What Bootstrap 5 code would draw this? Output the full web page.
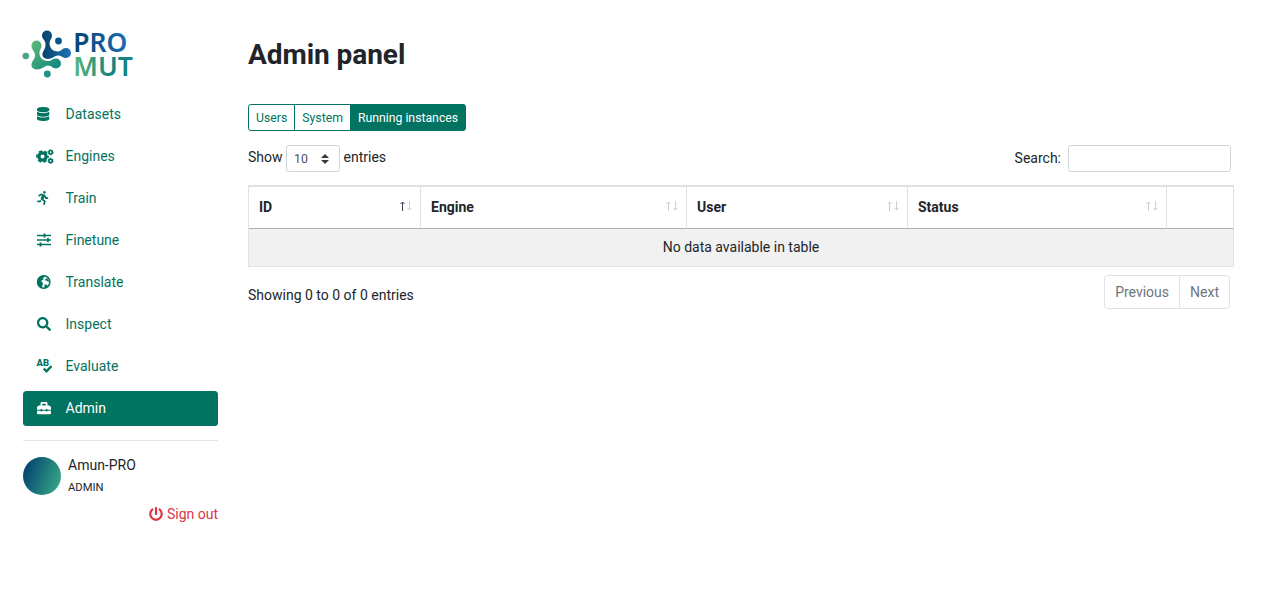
<!DOCTYPE html>
<html lang="en">
<head>
<meta charset="utf-8">
<meta name="viewport" content="width=device-width, initial-scale=1">
<title>Admin panel</title>
<link href="https://cdn.jsdelivr.net/npm/bootstrap@5.3.0/dist/css/bootstrap.min.css" rel="stylesheet">
<style>
html{font-size:14px}
body{font-family:Roboto,sans-serif;color:#212529;line-height:1.5;min-height:589px}
.sidebar{width:195px;margin-left:23px;padding-top:28px}
.logo{display:block;width:113px;height:52px;margin-left:-2px;overflow:visible}
.side-nav{margin-top:17px;gap:7px}
.side-nav .nav-link{height:35px;padding:0 13px;color:#027360;border-radius:3.500px;gap:13.500px}
.side-nav .nav-link.active{background:#027360;color:#fff}
.side-nav svg{width:16px;height:14px;flex:none;margin-bottom:1px}
.side-line{height:1px;background:#e5e5e5;margin:14px 0 16px}
.avatar{width:38px;height:38px;background:linear-gradient(110deg,#03416f 8%,#35a884 92%)}
.who{line-height:22px;margin-top:-3px;margin-left:7px}
.role{font-size:11.200px;line-height:24px;margin-bottom:-2px}
.signout{color:#dc3545;line-height:22px;margin-top:5px;gap:3px}
.signout svg{margin-right:1px}
.content{width:986px;margin-left:30px;padding-top:37px}
h1{font-size:28px;font-weight:700;line-height:36px;margin-bottom:31px;letter-spacing:-.05px}
.tabs{height:27px}
.tabs .btn{--bs-btn-color:#027360;--bs-btn-border-color:#027360;--bs-btn-active-color:#fff;--bs-btn-active-bg:#027360;--bs-btn-active-border-color:#027360;font-size:12.250px;line-height:19px;padding:4px 7px 2px;border-radius:2.800px}
.tools{height:27px;margin-top:14px;padding-right:3px}
.tools span{line-height:21px;margin-bottom:2px}
.len{width:54px;height:27px;padding:1px 7px 0;font-size:12.250px;color:#495057;border:1px solid #ced4da;border-radius:2.800px;background:#fff url("data:image/svg+xml,%3Csvg xmlns='http://www.w3.org/2000/svg' viewBox='0 0 4 5'%3E%3Cpath fill='%23343a40' d='M2 0L0 2h4zm0 5L0 3h4z'/%3E%3C/svg%3E") no-repeat right 10px center/8px 10px}
.find{width:163px;height:27px;min-height:0;border:1px solid #ced4da;border-radius:2.800px;margin-left:7px}
.grid-table{table-layout:fixed;margin:13px 0 0;border-collapse:separate;border-spacing:0;border:1px solid #dee2e6;border-top:2px solid #dee2e6;width:986px;color:#212529}
.grid-table th{height:42px;padding:0 8px 0 10px;border:0;border-right:1px solid #dee2e6;border-bottom:1px solid #adb1b4;font-weight:700}
.grid-table thead th{vertical-align:middle}
.grid-table th:last-child{border-right:0}
.grid-table td{height:37px;padding:0;border:0;background:#f1f1f1;text-align:center;box-shadow:none}
.sort{gap:2px;margin-top:-4px}
.sort svg{width:5px;height:10px;fill:none;stroke:#cdcdd3;stroke-width:1}
.sort .on{stroke:#3c3c55}
.foot{margin-top:8px;padding-right:4px}
.info{margin-top:10px}
.pagination .page-link{height:34px;padding:6px 10px;color:#6c757d;border-color:#dee2e6;font-size:14px;line-height:21px}
.pagination{--bs-pagination-border-radius:3.500px;margin:0}
</style>
</head>
<body class="d-flex align-items-start">
<aside class="sidebar flex-shrink-0">
<svg class="logo" viewBox="0 0 113 52">
<defs>
<linearGradient id="blue" gradientUnits="userSpaceOnUse" x1="22" y1="0" x2="50" y2="0"><stop stop-color="#07456f"/><stop offset="1" stop-color="#1f70b5"/></linearGradient>
<linearGradient id="green" gradientUnits="userSpaceOnUse" x1="8" y1="15" x2="36" y2="42"><stop stop-color="#60bb7b"/><stop offset="1" stop-color="#118581"/></linearGradient>
<linearGradient id="tb" gradientUnits="userSpaceOnUse" x1="53" y1="0" x2="106" y2="0"><stop stop-color="#064273"/><stop offset="1" stop-color="#1a6db1"/></linearGradient>
<linearGradient id="tg" gradientUnits="userSpaceOnUse" x1="53" y1="0" x2="112" y2="0"><stop stop-color="#58b57a"/><stop offset=".6" stop-color="#168581"/><stop offset="1" stop-color="#168581"/></linearGradient>
</defs>
<path fill="url(#green)" d="M10.500 17.500a5 5 0 0 1 10 0C20.500 21 18 22 18.500 26C19 30 22 33 27 33C31 33 31 30.500 35 30.500A4.800 4.800 0 0 1 35 40.500C31 40.500 31 37.500 27 37.500C23 38 21 41.500 16 41.500C11 41.500 9.500 37.500 11 34.500C12 32 14 31 14 27C14 23 10.500 22 10.500 17.500z"/>
<path fill="url(#blue)" d="M21 7.500a5 5 0 0 1 10 0C31 11 28.500 12 28.500 16C29 20.500 32 23.500 37 23.500C41 23 41 20 45 20A4.900 4.900 0 0 1 45 30C41 30 41 27.500 37 27.500C33 28 31 31 27 31C22 31 20.500 27 22 24C23.500 21 24.500 20 24.500 16C24.500 12 21 11 21 7.500z"/>
<circle cx="37.500" cy="13" r="3.400" fill="#07568c"/><circle cx="4.800" cy="28" r="3.300" fill="#48a586"/><circle cx="26.300" cy="46" r="3.400" fill="#209182"/>
<g style="font-family:'Noto Sans','Open Sans',sans-serif;font-size:27px;font-weight:600"><text x="52.300" y="24" textLength="54" lengthAdjust="spacingAndGlyphs" fill="url(#tb)">PRO</text><text x="52.300" y="48" textLength="59.500" lengthAdjust="spacingAndGlyphs" fill="url(#tg)">MUT</text></g>
</svg>
<nav class="nav flex-column side-nav">
<a class="nav-link d-flex align-items-center" href="#"><svg viewBox="0 0 512 512" fill="currentColor"><path d="M448 73.143v45.714C448 159.143 347.667 192 224 192S0 159.143 0 118.857V73.143C0 32.857 100.333 0 224 0s224 32.857 224 73.143zM448 176v102.857C448 319.143 347.667 352 224 352S0 319.143 0 278.857V176c48.125 33.143 136.208 48.572 224 48.572S399.874 209.143 448 176zm0 160v102.857C448 479.143 347.667 512 224 512S0 479.143 0 438.857V336c48.125 33.143 136.208 48.572 224 48.572S399.874 369.143 448 336z"/></svg>Datasets</a>
<a class="nav-link d-flex align-items-center" href="#"><svg style="width:18px;height:15px;margin-right:-2px" viewBox="0 0 18 15" fill="none" stroke="currentColor"><circle cx="6.500" cy="7.500" r="3.600" stroke-width="3.200"/><circle cx="6.500" cy="7.500" r="5.500" stroke-width="1.800" stroke-dasharray="3.260 2.500" stroke-dashoffset="1.600"/><g stroke-width="1.700"><circle cx="14.600" cy="3.200" r="1.700"/><circle cx="14.600" cy="11.800" r="1.700"/></g><g stroke-width="1" stroke-dasharray="1.360 1.360"><circle cx="14.600" cy="3.200" r="2.600"/><circle cx="14.600" cy="11.800" r="2.600"/></g></svg>Engines</a>
<a class="nav-link d-flex align-items-center" href="#"><svg viewBox="48 0 512 512" fill="currentColor"><path transform="translate(48)" d="M272 96c26.510 0 48-21.490 48-48S298.510 0 272 0s-48 21.490-48 48 21.490 48 48 48zM113.690 317.470l-14.800 34.520H32c-17.670 0-32 14.330-32 32s14.330 32 32 32h77.450c19.250 0 36.580-11.440 44.110-29.090l8.790-20.520-10.670-6.300c-17.320-10.230-30.060-25.370-37.990-42.610zM384 223.990h-44.030l-26.060-53.250c-12.500-25.550-35.450-44.230-61.780-50.940l-71.080-21.140c-28.300-6.800-57.770-.55-80.840 17.140l-39.670 30.410c-14.030 10.750-16.690 30.830-5.940 44.860s30.840 16.690 44.860 5.940l39.690-30.410c7.670-5.890 17.440-8 25.270-6.140l14.700 4.370-37.460 87.390c-12.620 29.480-1.310 64.010 26.300 80.310l84.980 50.170-27.470 87.730c-5.280 16.860 4.110 34.820 20.970 40.090 3.190 1 6.410 1.480 9.580 1.480 13.610 0 26.230-8.770 30.520-22.450l31.640-101.060c5.910-20.770-2.890-43.080-21.640-54.390l-61.240-36.140 31.310-78.280 20.270 41.430c8 16.340 24.920 26.890 43.110 26.890H384c17.670 0 32-14.330 32-32s-14.330-31.990-32-31.990z"/></svg>Train</a>
<a class="nav-link d-flex align-items-center" href="#"><svg viewBox="0 0 16 14" fill="none" stroke="currentColor"><path stroke-width="1.700" d="M1 2.500h14M1 7h14M1 11.500h14"/><path stroke-width="1.800" d="M8.500 .5v4M12 5v4M4.500 9.500v4"/></svg>Finetune</a>
<a class="nav-link d-flex align-items-center" href="#"><svg viewBox="0 0 16 14"><circle cx="7.700" cy="7" r="6.200" fill="none" stroke="currentColor" stroke-width="1.500"/><path fill="currentColor" d="M1.500 7C1.500 3.500 4 1 8 1L9 2 7 3 7.500 4.500 5 6 7 8 6.500 10 6 13C3.500 12.500 1.500 10 1.500 7zM8.500 5L11 3l2.700 4-1.800-.5L10 5.500zM8.500 9.300l3 .700-.500 2-2.500 1z"/></svg>Translate</a>
<a class="nav-link d-flex align-items-center" href="#"><svg viewBox="0 0 512 512" fill="currentColor"><path d="M505 442.700L405.300 343c-4.500-4.500-10.600-7-17-7H372c27.600-35.300 44-79.700 44-128C416 93.100 322.900 0 208 0S0 93.100 0 208s93.100 208 208 208c48.300 0 92.700-16.400 128-44v16.300c0 6.400 2.500 12.500 7 17l99.700 99.700c9.400 9.400 24.600 9.400 33.900 0l28.300-28.300c9.400-9.400 9.400-24.600.1-34zM208 336c-70.700 0-128-57.200-128-128 0-70.700 57.200-128 128-128 70.700 0 128 57.200 128 128 0 70.700-57.200 128-128 128z"/></svg>Inspect</a>
<a class="nav-link d-flex align-items-center" href="#"><svg viewBox="0 0 16 14"><text x=".5" y="7" font-size="9" font-weight="900" font-family="Roboto,sans-serif" textLength="12.500" lengthAdjust="spacingAndGlyphs" fill="currentColor">AB</text><path d="M7.800 9.700l2.700 2.600 5-5.200" fill="none" stroke="currentColor" stroke-width="2.400"/></svg>Evaluate</a>
<a class="nav-link active d-flex align-items-center" href="#"><svg viewBox="0 0 512 512" fill="currentColor"><path d="M502.630 214.630l-45.250-45.250c-6-6-14.140-9.370-22.630-9.370H384V80c0-26.510-21.490-48-48-48H176c-26.510 0-48 21.490-48 48v80H77.250c-8.490 0-16.620 3.370-22.630 9.370L9.370 214.630c-6 6-9.370 14.140-9.370 22.630V320h128v-16c0-8.840 7.160-16 16-16h32c8.840 0 16 7.160 16 16v16h128v-16c0-8.840 7.160-16 16-16h32c8.840 0 16 7.160 16 16v16h128v-82.750c0-8.480-3.370-16.620-9.370-22.620zM320 160H192V96h128v64zm64 208c0 8.840-7.160 16-16 16h-32c-8.840 0-16-7.160-16-16v-16H192v16c0 8.840-7.160 16-16 16h-32c-8.840 0-16-7.160-16-16v-16H0v96c0 17.670 14.330 32 32 32h448c17.670 0 32-14.330 32-32v-96H384v16z"/></svg>Admin</a>
</nav>
<div class="side-line"></div>
<div class="d-flex"><div class="avatar rounded-circle"></div><div class="who"><div>Amun-PRO</div><div class="role">ADMIN</div></div></div>
<a class="signout d-flex justify-content-end align-items-center text-decoration-none" href="#"><svg width="14" height="14" viewBox="0 0 512 512" fill="currentColor"><path d="M400 54.100c63 45 104 118.600 104 201.900 0 136.800-110.800 247.700-247.500 248C120 504.300 8.200 393 8 256.400 7.900 173.100 48.900 99.300 111.800 54.200c11.700-8.300 28-4.800 35 7.700L162.600 90c5.900 10.500 3.100 23.800-6.600 31-41.500 30.800-68 79.600-68 134.900-.1 92.300 74.500 168.100 168 168.100 91.600 0 168.600-74.200 168-169.100-.3-51.800-24.700-101.800-68.100-134-9.700-7.200-12.400-20.500-6.500-30.900l15.800-28.100c7-12.400 23.200-16.100 34.800-7.800zM296 264V24c0-13.300-10.700-24-24-24h-32c-13.300 0-24 10.700-24 24v240c0 13.300 10.700 24 24 24h32c13.300 0 24-10.700 24-24z"/></svg>Sign out</a>
</aside>
<main class="content flex-shrink-0">
<h1>Admin panel</h1>
<div class="btn-group tabs d-flex" style="width:max-content"><a class="btn btn-sm" href="#">Users</a><a class="btn btn-sm" href="#">System</a><a class="btn btn-sm active" href="#">Running instances</a></div>
<div class="tools d-flex justify-content-between align-items-center">
<div class="d-flex align-items-center"><span class="pe-1">Show</span><div class="len d-flex align-items-center">10</div><span class="ps-1">entries</span></div>
<label class="d-flex align-items-center"><span style="margin-bottom:1px">Search:</span><input class="form-control find"></label>
</div>
<table class="table grid-table">
<colgroup><col style="width:172px"><col style="width:266px"><col style="width:221px"><col style="width:259px"><col style="width:66px"></colgroup>
<thead><tr>
<th><div class="d-flex justify-content-between align-items-center">ID<span class="sort d-flex"><svg class="on" viewBox="0 0 5 10"><path d="M2.500 10V1M.5 3l2-2 2 2"/></svg><svg viewBox="0 0 5 10"><path d="M2.500 0v9M.5 7l2 2 2-2"/></svg></span></div></th>
<th><div class="d-flex justify-content-between align-items-center">Engine<span class="sort d-flex"><svg viewBox="0 0 5 10"><path d="M2.500 10V1M.5 3l2-2 2 2"/></svg><svg viewBox="0 0 5 10"><path d="M2.500 0v9M.5 7l2 2 2-2"/></svg></span></div></th>
<th><div class="d-flex justify-content-between align-items-center">User<span class="sort d-flex"><svg viewBox="0 0 5 10"><path d="M2.500 10V1M.5 3l2-2 2 2"/></svg><svg viewBox="0 0 5 10"><path d="M2.500 0v9M.5 7l2 2 2-2"/></svg></span></div></th>
<th><div class="d-flex justify-content-between align-items-center">Status<span class="sort d-flex"><svg viewBox="0 0 5 10"><path d="M2.500 10V1M.5 3l2-2 2 2"/></svg><svg viewBox="0 0 5 10"><path d="M2.500 0v9M.5 7l2 2 2-2"/></svg></span></div></th>
<th></th></tr></thead>
<tbody><tr><td colspan="5" class="align-middle">No data available in table</td></tr></tbody>
</table>
<div class="foot d-flex justify-content-between align-items-start"><div class="info">Showing 0 to 0 of 0 entries</div>
<ul class="pagination"><li class="page-item"><a class="page-link" href="#">Previous</a></li><li class="page-item"><a class="page-link" href="#">Next</a></li></ul></div>
</main>
<script src="https://cdn.jsdelivr.net/npm/bootstrap@5.3.0/dist/js/bootstrap.bundle.min.js"></script>
</body>
</html>
